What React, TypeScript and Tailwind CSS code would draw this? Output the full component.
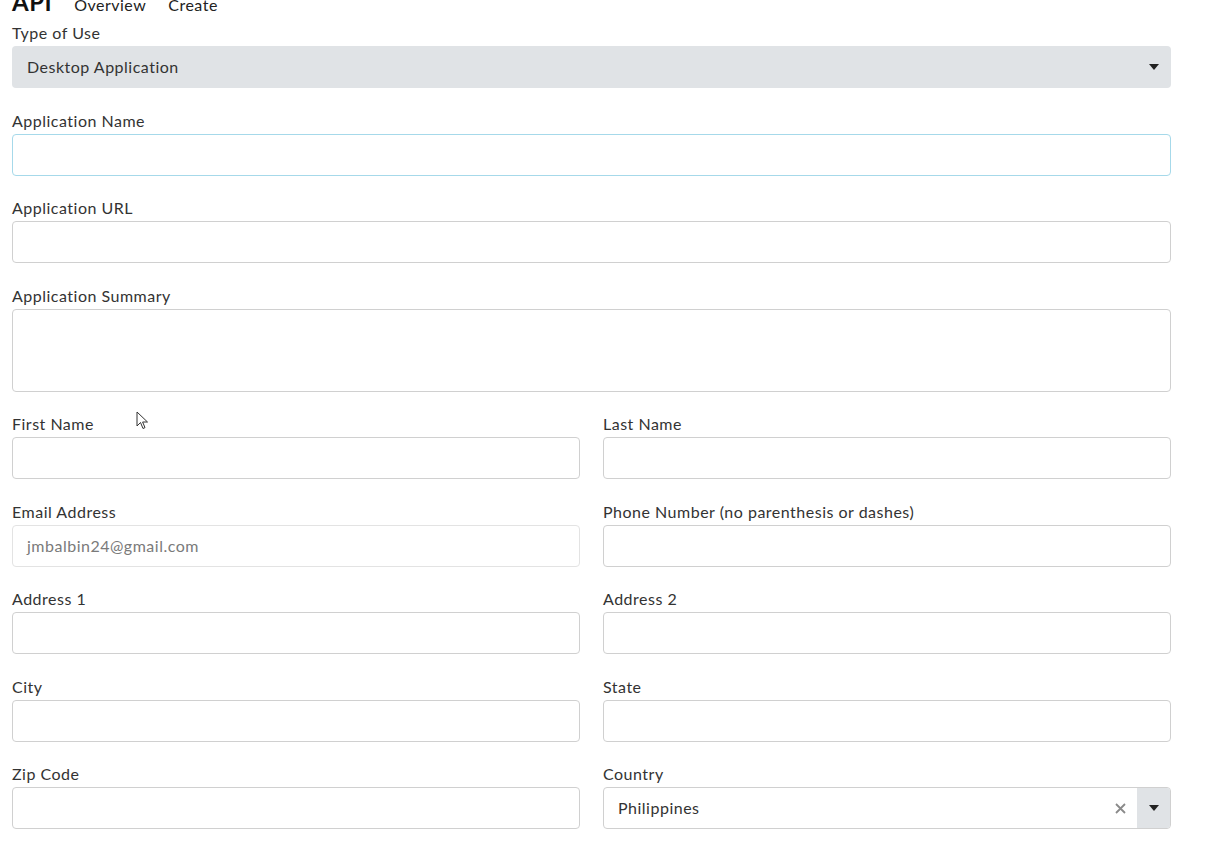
import React from 'react'

const font = { fontFamily: 'Lato, "Noto Sans", sans-serif' }

function Caret() {
	return (
		<svg width="10" height="6" viewBox="0 0 10 6" className="block">
			<path d="M0 0 L10 0 L5 6 Z" fill="#222" />
		</svg>
	)
}

function Label({ children }: { children: React.ReactNode }) {
	return <div className="text-[16px] leading-[24px] tracking-[0.5px] text-[#333] mb-px">{children}</div>
}

function Field({
	label,
	value,
	focused,
	muted,
}: {
	label: string
	value?: string
	focused?: boolean
	muted?: boolean
}) {
	return (
		<div className="mb-[20.5px]">
			<Label>{label}</Label>
			<div
				className={
					'h-[42px] rounded-[4px] border bg-white px-[14px] flex items-center text-[16px] tracking-[0.5px] ' +
					(focused ? 'border-[#a6d9ea] ' : muted ? 'border-[#e3e3e3] ' : 'border-[#d0d0d0] ') +
					(muted ? 'text-[#7a7a7a]' : 'text-[#333]')
				}
			>
				{value}
			</div>
		</div>
	)
}

export default function App() {
	return (
		<div className="min-h-screen w-full bg-white overflow-hidden relative" style={font}>
			<div className="w-[1159px] ml-3">
				{/* top nav */}
				<div className="flex items-baseline gap-[22px] -mt-[12px] h-[33px] tracking-[0.5px]">
					<span className="text-[24px] font-bold text-[#111] leading-[28px]">API</span>
					<span className="text-[16px] text-[#222]">Overview</span>
					<span className="text-[16px] text-[#222]">Create</span>
				</div>

				<div className="mb-[20.5px]">
					<Label>Type of Use</Label>
					<div className="h-[42px] rounded-[4px] bg-[#e0e3e6] pl-[15px] pr-[12px] flex items-center justify-between text-[16px] tracking-[0.5px] text-[#333]">
						<span>Desktop Application</span>
						<Caret />
					</div>
				</div>

				<Field label="Application Name" focused />
				<Field label="Application URL" />

				<div className="mb-[20.5px]">
					<Label>Application Summary</Label>
					<div className="h-[83px] rounded-[4px] border border-[#d0d0d0] bg-white" />
				</div>

				<div className="grid grid-cols-2 gap-x-[23px]">
					<Field label="First Name" />
					<Field label="Last Name" />
					<Field label="Email Address" value="jmbalbin24@gmail.com" muted />
					<Field label="Phone Number (no parenthesis or dashes)" />
					<Field label="Address 1" />
					<Field label="Address 2" />
					<Field label="City" />
					<Field label="State" />
					<Field label="Zip Code" />
					<div className="mb-[20.5px]">
						<Label>Country</Label>
						<div className="h-[42px] rounded-[4px] border border-[#d0d0d0] bg-white flex items-stretch overflow-hidden text-[16px] tracking-[0.5px] text-[#333]">
							<span className="flex-1 flex items-center pl-[14px]">Philippines</span>
							<span className="flex items-center pr-[11px]">
								<svg width="11" height="11" viewBox="0 0 11 11">
									<path d="M1 1 L10 10 M10 1 L1 10" stroke="#8a8a8a" strokeWidth="1.8" />
								</svg>
							</span>
							<span className="w-[33px] bg-[#e0e3e6] flex items-center justify-center">
								<Caret />
							</span>
						</div>
					</div>
				</div>
			</div>

			{/* mouse pointer */}
			<svg
				className="absolute left-[136px] top-[411px]"
				width="13"
				height="20"
				viewBox="0 0 13 20"
			>
				<path
					d="M1 1 L1 15 L4.5 11.5 L7 17.5 L9 16.6 L6.6 11 L11.5 11 Z"
					fill="#fff"
					stroke="#333"
					strokeWidth="1"
					strokeLinejoin="round"
				/>
			</svg>
		</div>
	)
}
